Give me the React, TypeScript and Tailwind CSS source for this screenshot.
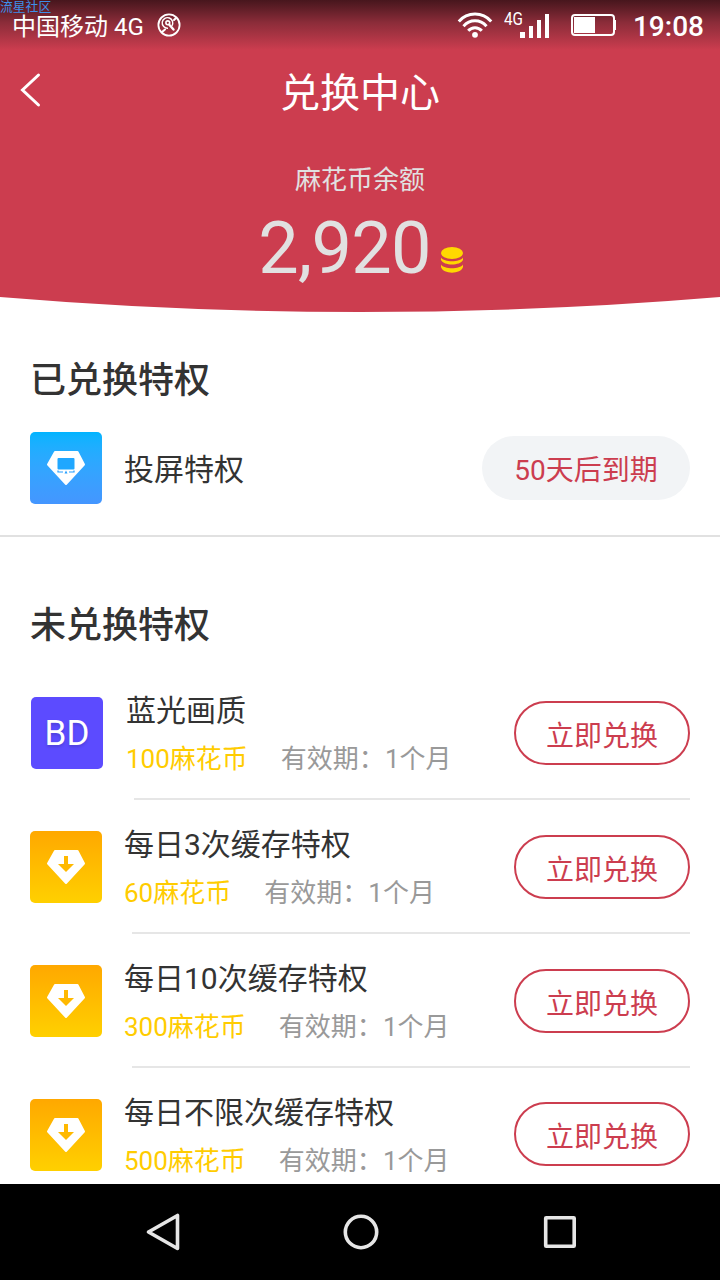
import type { ReactNode } from 'react'

interface Privilege {
  id: string
  name: string
  price: number
  period: string
  kind: 'bd' | 'cache'
}

const PRIVILEGES: Privilege[] = [
  { id: 'bd', name: '蓝光画质', price: 100, period: '1个月', kind: 'bd' },
  { id: 'cache-3', name: '每日3次缓存特权', price: 60, period: '1个月', kind: 'cache' },
  { id: 'cache-10', name: '每日10次缓存特权', price: 300, period: '1个月', kind: 'cache' },
  { id: 'cache-all', name: '每日不限次缓存特权', price: 500, period: '1个月', kind: 'cache' },
]

function StatusBar() {
  return (
    <div className="relative flex h-[50px] items-center bg-linear-to-b from-[#47161d] via-[#8b2c39] via-45% to-[#cc3d4f] text-white">
      <span className="absolute left-0 top-0 text-[12.8px] leading-[14px] text-[#3d8fe8]">流星社区</span>
      <span className="ml-3 mt-[3px] text-2xl leading-6">中国移动 4G</span>
      <svg className="ml-[13px]" width="24" height="24" viewBox="0 0 24 24" fill="none" stroke="currentColor">
        <circle cx="12" cy="12" r="10.6" strokeWidth="1.8" />
        <path d="M14.800 13A5.300 5.300 0 1 0 11 15.200" strokeWidth="1.400" />
        <circle cx="10.800" cy="9.800" r="1.900" strokeWidth="1.600" />
        <path d="M12.500 12l4 4.500" strokeWidth="2.400" strokeLinecap="round" />
        <path d="M17 7l2-2M5 19l3-2.500" strokeWidth="2" strokeLinecap="round" />
      </svg>
      <svg className="ml-auto" width="36" height="28" viewBox="0 0 36 28" fill="none" stroke="currentColor" strokeWidth="3">
        <path d="M1.8 10.5C10.5 0.6 25.5 0.6 34.200 10.500" />
        <path d="M6.500 15.200C12.800 8 23.200 8 29.500 15.200" />
        <path d="M11.200 19.800C15 15.600 21 15.600 24.800 19.800" />
        <circle cx="18" cy="23.800" r="2.900" fill="currentColor" stroke="none" />
      </svg>
      <svg className="ml-[11px]" width="48" height="32" viewBox="0 0 48 32" fill="currentColor">
        <text x="0" y="15.500" fontSize="17.500" textLength="19" lengthAdjust="spacingAndGlyphs">4G</text>
        <path d="M16 23h5v6h-5zM25 17h4v12h-4zM33 11h4v18h-4zM41 5h4v24h-4z" />
      </svg>
      <svg className="ml-[18px]" width="46" height="24" viewBox="0 0 46 24" fill="none" stroke="currentColor">
        <rect x="2" y="2" width="42" height="20" rx="3" strokeWidth="2" />
        <path d="M4 4h21v16H4z" fill="currentColor" stroke="none" />
        <path d="M44 7h2v10h-2z" fill="currentColor" stroke="none" />
      </svg>
      <span className="ml-[17px] mr-4 mt-[3px] text-[28px] font-medium leading-8">19:08</span>
    </div>
  )
}

function GemIcon({ children }: { children: ReactNode }) {
  return (
    <svg width="72" height="72" viewBox="0 0 72 72" fill="none">
      <path
        d="M25 20h22.500l6.500 12.500L36 52 18 32.500z"
        fill="white"
        stroke="white"
        strokeWidth="2"
        strokeLinejoin="round"
      />
      {children}
    </svg>
  )
}

function PrivilegeIcon({ kind }: { kind: Privilege['kind'] }) {
  if (kind === 'bd') {
    return (
      <div className="h-[72px] w-[72px] rounded-[5px] bg-[#5c4bff] text-center text-[35px] leading-[73px] text-white">
        <span className="[text-shadow:0_2px_3px_rgba(0,0,0,0.15)]">BD</span>
      </div>
    )
  }
  return (
    <div className="h-[72px] w-[72px] rounded-[5px] bg-linear-to-b from-[#ffa800] to-[#ffd000]">
      <GemIcon>
        <path d="M34 25h4v8h6l-8 8-8-8h6z" fill="#ffb900" />
      </GemIcon>
    </div>
  )
}

function PrivilegeRow({ item, last }: { item: Privilege; last: boolean }) {
  const bd = item.kind === 'bd'
  return (
    <li className={`relative flex h-[134px] shrink-0 pr-[30px] pt-[31px] ${bd ? 'pl-[31px]' : 'pl-[30px]'}`}>
      <PrivilegeIcon kind={item.kind} />
      <div className={`flex-1 whitespace-nowrap ${bd ? 'ml-[23px]' : 'ml-[22px]'}`}>
        <h3 className="-mt-[10px] text-[30px] leading-[48px] text-[#333]">{item.name}</h3>
        <p className="text-[26px] leading-[49px]">
          <span className="text-[#ffcc00]">{item.price}麻花币</span>
          <span className="ml-[33px] text-[#999]">有效期：{item.period}</span>
        </p>
      </div>
      <button
        className={`h-16 w-44 rounded-full border-2 border-[#cc3d4f] pt-1 text-[28px] leading-[60px] text-[#cc3d4f] ${
          last ? 'mt-[3px]' : 'mt-1'
        }`}
      >
        立即兑换
      </button>
      {!last && (
        <div className={`absolute bottom-0 right-[30px] h-0.5 bg-[#e6e6e6] ${bd ? 'left-[134px]' : 'left-[132px]'}`} />
      )}
    </li>
  )
}

export default function App() {
  return (
    <div className="flex h-[1280px] w-[720px] flex-col overflow-hidden bg-white font-[Roboto,'Noto_Sans_CJK_SC',sans-serif]">
      {/* Header */}
      <header className="shrink-0 bg-[#cc3d4f]">
        <StatusBar />
        <div className="grid h-20 grid-cols-[1fr_auto_1fr] items-center text-white">
          <svg className="ml-5" width="22" height="36" viewBox="0 0 22 36" fill="none" stroke="currentColor" strokeWidth="3">
            <path d="M18.500 3L2.500 18l16 15" strokeLinecap="round" />
          </svg>
          <h1 className="mt-2 text-[40px] leading-[60px]">兑换中心</h1>
        </div>
        <div className="flex h-[167px] flex-col items-center pt-[31px] text-[#e1e1e1]">
          <p className="text-[26px] leading-[38px]">麻花币余额</p>
          <div className="mt-2 flex">
            <span className="ml-[2px] text-[72px] leading-[84px] tracking-[-0.7px]">2,920</span>
            <svg className="ml-[9px] mt-[39px]" width="24" height="28" viewBox="0 0 24 28" fill="#ffd800">
              <ellipse cx="12" cy="7" rx="11" ry="6" />
              <path d="M1 11.500C4 16.500 20 16.500 23 11.500V14C20 20 4 20 1 14z" />
              <path d="M1 18.500C4 23.500 20 23.500 23 18.500V21C21 28.500 3 28.500 1 21z" />
            </svg>
          </div>
        </div>
      </header>
      <svg className="block shrink-0" width="720" height="15" viewBox="0 0 720 15">
        <path d="M0 0Q360 30 720 0z" fill="#cc3d4f" />
      </svg>

      {/* Active privileges */}
      <section className="h-[225px] shrink-0 border-b-2 border-[#e1e1e1] pt-11">
        <h2 className="ml-[30px] text-4xl font-medium leading-[50px] text-[#333]">已兑换特权</h2>
        <div className="mt-[26px] flex items-center px-[30px]">
          <div className="h-[72px] w-[72px] rounded-[5px] bg-linear-to-b from-[#00b4ff] to-[#4496ff]">
            <GemIcon>
              <rect x="27.500" y="26" width="17" height="11.500" rx="1" fill="#20a7ff" />
              <path d="M28 38.500v1.500h5M44 38.500v1.500h-5" stroke="#279fff" strokeWidth="1.200" />
              <path d="M36 38.500l1.500 3h-3z" fill="#279fff" />
            </GemIcon>
          </div>
          <span className="ml-[22px] mt-1 text-[30px] leading-[48px] text-[#333]">投屏特权</span>
          <span className="ml-auto h-16 w-52 rounded-full bg-[#f2f4f6] text-center text-[28px] leading-[69px] text-[#cc3d4f]">
            50天后到期
          </span>
        </div>
      </section>

      {/* Available privileges */}
      <section className="flex min-h-0 flex-1 flex-col overflow-hidden pt-16">
        <h2 className="ml-[30px] text-4xl font-medium leading-[50px] text-[#333]">未兑换特权</h2>
        <ul className="mt-[15px]">
          {PRIVILEGES.map((item, i) => (
            <PrivilegeRow key={item.id} item={item} last={i === PRIVILEGES.length - 1} />
          ))}
        </ul>
      </section>

      {/* System navigation */}
      <nav className="flex h-24 shrink-0 items-center justify-center bg-black">
        <svg width="440" height="40" viewBox="0 0 440 40" fill="none" stroke="#e6e6e6" strokeWidth="3.600" strokeLinejoin="round">
          <path d="M37.500 3.500v33L8.500 20z" />
          <circle cx="221" cy="20" r="15.700" />
          <rect x="405.700" y="5.700" width="28.500" height="28.500" rx="0.500" />
        </svg>
      </nav>
    </div>
  )
}
